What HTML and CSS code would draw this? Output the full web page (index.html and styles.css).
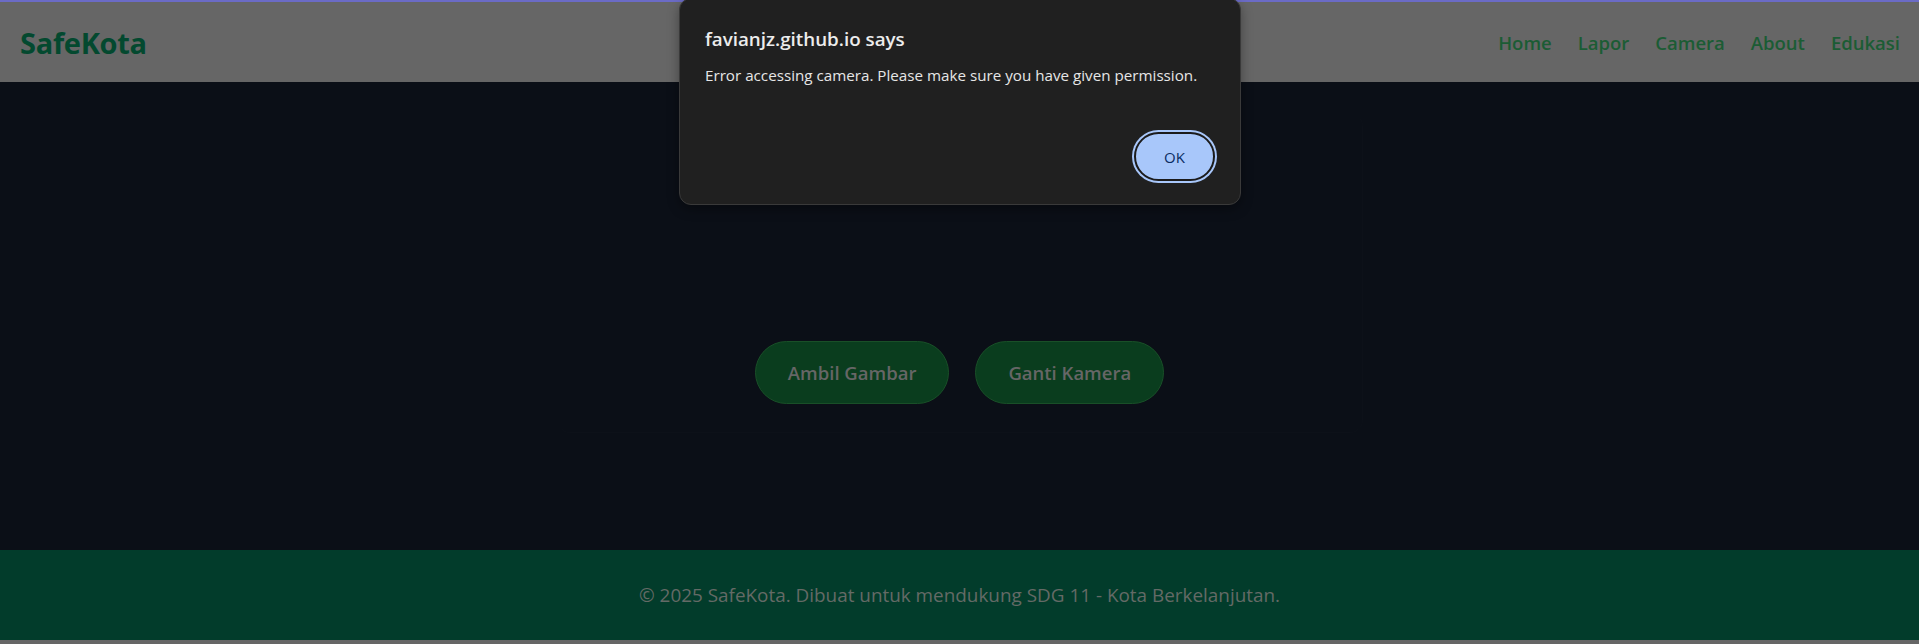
FILE: index.html
```html
<!DOCTYPE html>
<html lang="id">
<head>
<meta charset="utf-8">
<title>SafeKota - Camera</title>
<link rel="stylesheet" href="styles.css">
</head>
<body>
<div class="tabline"></div>
<header class="site-header">
  <div class="logo">SafeKota</div>
  <nav class="nav">
    <a href="#">Home</a>
    <a href="#">Lapor</a>
    <a href="#">Camera</a>
    <a href="#">About</a>
    <a href="#">Edukasi</a>
  </nav>
</header>
<main class="main">
  <section class="camera-card">
    <div class="video-area"></div>
    <div class="controls">
      <button class="btn">Ambil Gambar</button>
      <button class="btn">Ganti Kamera</button>
    </div>
  </section>
</main>
<footer class="site-footer">
  <p>© 2025 SafeKota. Dibuat untuk mendukung SDG 11 - Kota Berkelanjutan.</p>
</footer>

<div class="alert" role="dialog">
  <div class="alert-title">favianjz.github.io says</div>
  <div class="alert-msg">Error accessing camera. Please make sure you have given permission.</div>
  <div class="alert-actions">
    <button class="ok">OK</button>
  </div>
</div>
</body>
</html>
```

FILE: styles.css
```css
* { box-sizing: border-box; }

html, body {
  margin: 0;
  padding: 0;
}

body {
  background: #666666;
  font-family: "Open Sans", "Noto Sans", sans-serif;
  width: 1919px;
  height: 644px;
  overflow: hidden;
  position: relative;
}

.tabline {
  height: 2px;
  background: #6b6bc6;
}

.site-header {
  height: 80px;
  background: #666666;
  display: flex;
  align-items: center;
  justify-content: space-between;
  padding: 0 19px 0 20px;
}

.logo {
  color: #03492f;
  font-weight: 700;
  font-size: 29px;
  letter-spacing: -0.3px;
}

.nav {
  display: flex;
  gap: 26px;
}

.nav a {
  color: #1b5c34;
  text-decoration: none;
  font-weight: 600;
  font-size: 18.5px;
}

.main {
  height: 468px;
  background: #0b0f17;
  padding-top: 32px;
}

.camera-card {
  width: 804px;
  margin: 0 auto;
  height: 318px;
  display: flex;
  flex-direction: column;
  justify-content: flex-end;
  padding-bottom: 28px;
  border-radius: 12px;
  box-shadow: 0 1px 0 rgba(255, 255, 255, 0.012), 1px 0 0 rgba(255, 255, 255, 0.01);
}

.video-area {
  flex: 1;
}

.controls {
  display: flex;
  justify-content: center;
  gap: 26px;
}

.btn {
  font-family: inherit;
  height: 63px;
  padding: 0 32px;
  border-radius: 32px;
  background: #0a3d1e;
  border: 1px solid #194f28;
  color: #666666;
  font-weight: 600;
  font-size: 18.5px;
}

.site-footer {
  height: 90px;
  background: #023c2b;
  display: flex;
  align-items: center;
  justify-content: center;
}

.site-footer p {
  margin: 0;
  color: #646a66;
  font-size: 18.9px;
}

.alert {
  position: absolute;
  top: -2px;
  left: 679px;
  width: 562px;
  height: 207px;
  background: #202020;
  border: 1px solid #3a3a3a;
  border-radius: 12px;
  box-shadow: 0 4px 12px rgba(0, 0, 0, 0.35);
  padding: 28px 25px 0 25px;
  color: #e8e8e8;
}

.alert-title {
  font-size: 18.8px;
  font-weight: 600;
  line-height: 24px;
  color: #ececec;
}

.alert-msg {
  margin-top: 14px;
  font-size: 15.2px;
  line-height: 20px;
  color: #e6e6e6;
}

.alert-actions {
  display: flex;
  justify-content: flex-end;
  margin-top: 47px;
}

.ok {
  font-family: inherit;
  width: 81px;
  height: 49px;
  border-radius: 25px;
  border: 2px solid #1b1b1b;
  background: #a8c7fa;
  box-shadow: 0 0 0 2px #a8c7fa;
  color: #0b2d62;
  font-size: 15px;
  font-weight: 500;
}
```
